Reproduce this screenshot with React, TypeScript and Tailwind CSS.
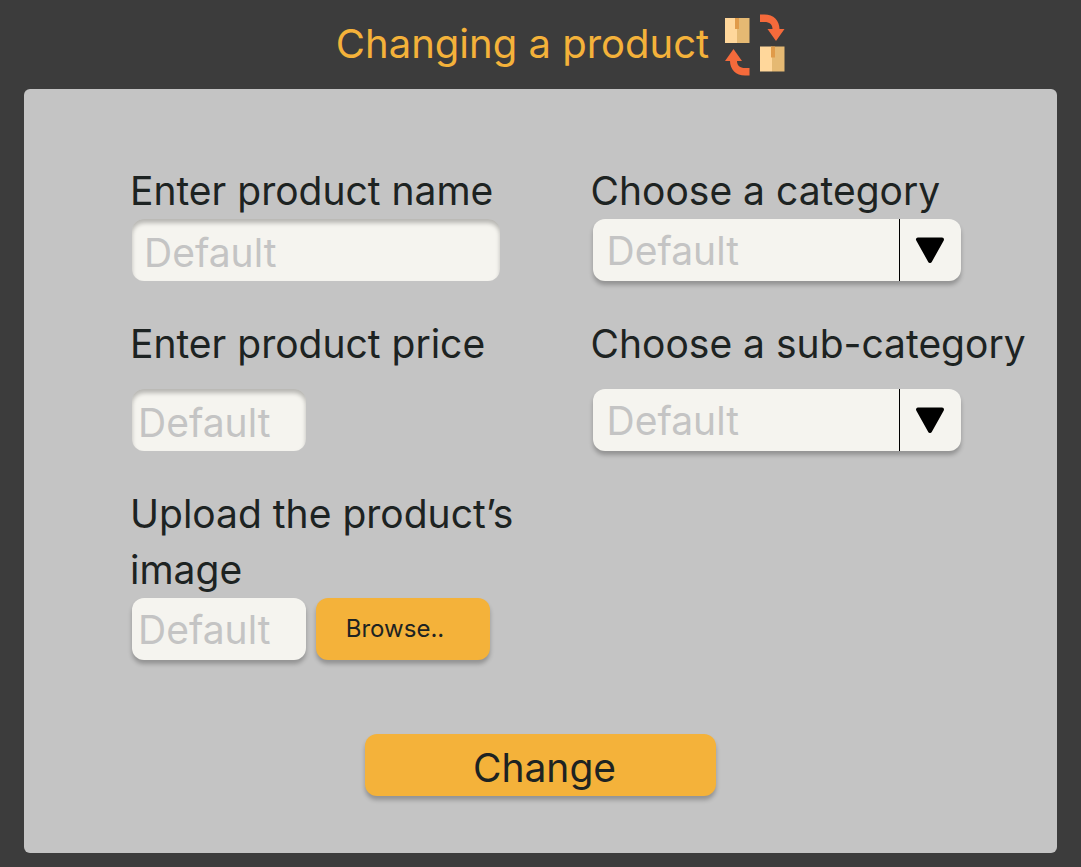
import { useState } from "react";
import type { ReactNode } from "react";

const fieldText = "font-['Inter',sans-serif] text-[39px] leading-[46px] text-[#1d2322]";
const placeholder = "placeholder:text-[#c4c4c4] placeholder:opacity-100";
const insetShadow = "shadow-[inset_0_4px_4px_rgba(0,0,0,0.25)]";
const dropShadow = "shadow-[0_4px_4px_rgba(0,0,0,0.25)]";

function SwapIcon() {
  return (
    <svg width="60" height="62" viewBox="0 0 60 62" aria-hidden="true" className="shrink-0">
      <path fill="#ffd79b" d="M0 4h12v25H0z" />
      <path fill="#e5b973" d="M12 4h12.500v25H12z" />
      <path fill="#e09b4a" d="M10 4h4v11h-4z" />
      <path fill="#ffd79b" d="M35 32.500h12v25H35z" />
      <path fill="#e5b973" d="M47 32.500h12.500v25H47z" />
      <path fill="#e09b4a" d="M46 32.500h4v11h-4z" />
      <path fill="#f56a3b" d="M35 0.500h4.500C48.500 0.500 54.500 6.500 54.500 15H59.500L51 27L42.500 15H47.500C47.500 10.500 44.500 8 39.500 8H35z" />
      <path fill="#f56a3b" d="M24.500 61.500H20C11 61.500 5 55.500 5 47H0L8.500 35L17 47H12C12 51.500 15 54 20 54H24.500z" />
    </svg>
  );
}

function Label({ htmlFor, children }: { htmlFor: string; children: ReactNode }) {
  return (
    <label
      htmlFor={htmlFor}
      className="-ml-0.5 block font-['Inter',sans-serif] text-[39px] leading-[56px] text-[#1d2322]"
    >
      {children}
    </label>
  );
}

function Dropdown({ id, options }: { id: string; options: string[] }) {
  const [value, setValue] = useState("");
  return (
    <div className={`relative w-4/5 rounded-xl bg-[#f5f4ef] ${dropShadow}`}>
      <select
        id={id}
        value={value}
        onChange={(event) => setValue(event.target.value)}
        className={`block h-[62px] w-full appearance-none rounded-xl bg-transparent pt-0.5 pr-16 pl-3.5 ${fieldText} ${value ? "" : "text-[#c4c4c4]!"}`}
      >
        <option value="">Default</option>
        {options.map((option) => (
          <option key={option}>{option}</option>
        ))}
      </select>
      <span className="pointer-events-none absolute inset-y-0 right-0 flex w-[62px] items-center justify-center border-l border-black">
        <svg width="30" height="28" viewBox="0 0 30 28" aria-hidden="true">
          <path d="M3 3.500H27L15 25z" stroke="#000" strokeWidth="4" strokeLinejoin="round" />
        </svg>
      </span>
    </div>
  );
}

export default function App() {
  return (
    <main className="min-h-screen bg-[#3c3c3c] px-6 pb-3.5">
      <header className="flex h-[89px] items-center justify-center gap-4 pl-10">
        <h1 className="pb-0.5 font-['Inter',sans-serif] text-[40px] leading-[56px] text-[#f4b23a]">
          Changing a product
        </h1>
        <SwapIcon />
      </header>

      <form
        className="rounded-md bg-[#c4c4c4] pt-[74px] pb-[57px]"
        onSubmit={(event) => event.preventDefault()}
      >
        <div className="grid grid-cols-2 gap-y-[35px] pr-1 pl-[108px]">
          <div>
            <Label htmlFor="name">Enter product name</Label>
            <input
              id="name"
              type="text"
              placeholder="Default"
              className={`block h-[62px] w-4/5 rounded-xl bg-[#f5f4ef] px-3 pt-1 ${fieldText} ${placeholder} ${insetShadow}`}
            />
          </div>
          <div>
            <Label htmlFor="category">Choose a category</Label>
            <Dropdown id="category" options={["Food", "Clothing", "Electronics"]} />
          </div>
          <div className="flex flex-col gap-[17px]">
            <Label htmlFor="price">Enter product price</Label>
            <input
              id="price"
              type="text"
              placeholder="Default"
              className={`block h-[62px] w-[174px] rounded-xl bg-[#f5f4ef] px-1.5 pt-1 ${fieldText} ${placeholder} ${insetShadow}`}
            />
          </div>
          <div className="flex flex-col gap-[17px]">
            <Label htmlFor="subcategory">Choose a sub-category</Label>
            <Dropdown id="subcategory" options={["Fresh", "Frozen", "Canned"]} />
          </div>
          <div>
            <Label htmlFor="image">Upload the product’s image</Label>
            <div className="flex gap-2.5">
              <input
                id="image"
                type="text"
                placeholder="Default"
                className={`block h-[62px] w-[174px] rounded-xl bg-[#f5f4ef] px-1.5 ${fieldText} ${placeholder} ${dropShadow}`}
              />
              <button
                type="button"
                className={`h-[62px] w-[174px] rounded-xl bg-[#f4b23a] pr-4 font-['Inter',sans-serif] text-2xl text-[#1d2322] ${dropShadow}`}
              >
                Browse..
              </button>
            </div>
          </div>
        </div>

        <button
          type="submit"
          className={`mx-auto mt-[74px] block h-[62px] w-[351px] rounded-xl bg-[#f4b23a] pt-1.5 pl-2 ${fieldText} ${dropShadow}`}
        >
          Change
        </button>
      </form>
    </main>
  );
}
